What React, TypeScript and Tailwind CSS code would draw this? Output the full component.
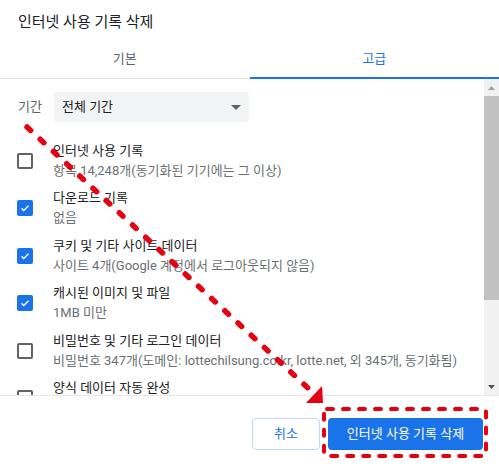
import React from "react";

interface Item {
  title: string;
  detail: string;
  checked: boolean;
}

const items: Array<Item> = [
  { title: "인터넷 사용 기록", detail: "항목 14,248개(동기화된 기기에는 그 이상)", checked: false },
  { title: "다운로드 기록", detail: "없음", checked: true },
  { title: "쿠키 및 기타 사이트 데이터", detail: "사이트 4개(Google 계정에서 로그아웃되지 않음)", checked: true },
  { title: "캐시된 이미지 및 파일", detail: "1MB 미만", checked: true },
  {
    title: "비밀번호 및 기타 로그인 데이터",
    detail: "비밀번호 347개(도메인: lottechilsung.co.kr, lotte.net, 외 345개, 동기화됨)",
    checked: false,
  },
  { title: "양식 데이터 자동 완성", detail: "", checked: false },
];

function Checkbox({ checked }: { checked: boolean }) {
  if (checked) {
    return (
      <div className="w-[16px] h-[16px] rounded-[2px] bg-[#1a73e8] flex items-center justify-center shrink-0">
        <svg width="12" height="12" viewBox="0 0 24 24">
          <path d="M5 12.5l4.5 4.5L19 7.5" fill="none" stroke="white" strokeWidth="2.6" />
        </svg>
      </div>
    );
  }
  return <div className="w-[16px] h-[16px] rounded-[2px] border-2 border-[#5f6368] shrink-0" />;
}

export default function App() {
  return (
    <div
      className="relative w-[499px] h-[468px] bg-white overflow-hidden text-[#202124]"
      style={{ fontFamily: 'Roboto, "Noto Sans CJK KR", sans-serif' }}
    >
      <div className="h-[40px] px-[18px] pt-[11px] text-[15px] leading-[22px]">인터넷 사용 기록 삭제</div>

      <div className="flex h-[39px] border-b border-[#e0e0e0]">
        <div className="flex-1 flex items-center justify-center text-[13px] text-[#5f6368]">기본</div>
        <div className="flex-1 flex items-center justify-center text-[13px] text-[#1a73e8] border-b-2 border-[#1a73e8] mb-[-1px]">
          고급
        </div>
      </div>

      <div className="flex h-[316px] overflow-hidden">
        <div className="flex-1 overflow-hidden">
          <div className="flex items-center pl-[18px] pt-[13px] h-[43px]">
            <span className="text-[13px] text-[#5f6368] w-[36px]">기간</span>
            <div className="w-[195px] h-[30px] rounded-[4px] bg-[#f1f3f4] flex items-center justify-between pl-[8px] pr-[8px]">
              <span className="text-[13px]">전체 기간</span>
              <svg width="10" height="5" viewBox="0 0 10 5">
                <path d="M0 0h10L5 5z" fill="#5f6368" />
              </svg>
            </div>
          </div>
          <div className="pt-[15px]">
            {items.map((it, index) => (
              <div className="flex items-center h-[47.5px]" key={`item_${index}`}>
                <div className="w-[53px] pl-[17px]">
                  <Checkbox checked={it.checked} />
                </div>
                <div className="text-[13px] leading-[20px]">
                  <div className="text-[#202124] whitespace-nowrap">{it.title}</div>
                  <div className="text-[#6b6f73] whitespace-nowrap h-[20px]">{it.detail}</div>
                </div>
              </div>
            ))}
          </div>
        </div>
        <div className="w-[15px] bg-[#f1f1f1] flex flex-col items-center">
          <div className="h-[17px] flex items-center justify-center">
            <svg width="7" height="4" viewBox="0 0 7 4">
              <path d="M0 4h7L3.5 0z" fill="#a3a3a3" />
            </svg>
          </div>
          <div className="w-[15px] h-[204px] bg-[#c1c1c1]" />
          <div className="flex-1" />
          <div className="h-[17px] flex items-center justify-center">
            <svg width="7" height="4" viewBox="0 0 7 4">
              <path d="M0 0h7L3.5 4z" fill="#505050" />
            </svg>
          </div>
        </div>
      </div>

      <div className="border-t border-[#e8e8e8] flex justify-end gap-[8px] pt-[22px] pr-[16px]">
        <button className="h-[32px] w-[68px] rounded-[4px] border border-[#c6d6f4] text-[13px] text-[#1a73e8] bg-white">
          취소
        </button>
        <button className="h-[32px] w-[155px] rounded-[4px] bg-[#1a73e8] text-[13px] text-white">
          인터넷 사용 기록 삭제
        </button>
      </div>

      <svg className="absolute left-0 top-0 pointer-events-none" width="499" height="468" viewBox="0 0 499 468">
        <line
          x1="27"
          y1="127"
          x2="308"
          y2="388"
          stroke="#e60012"
          strokeWidth="5.5"
          strokeLinecap="round"
          strokeDasharray="5 13"
        />
        <path d="M322 386L323 403L306 403z" fill="#e60012" />
        <rect
          x="324"
          y="409"
          width="162"
          height="47"
          rx="3"
          fill="none"
          stroke="#e60012"
          strokeWidth="4"
          strokeLinecap="round"
          strokeDasharray="6 10"
        />
      </svg>
    </div>
  );
}
